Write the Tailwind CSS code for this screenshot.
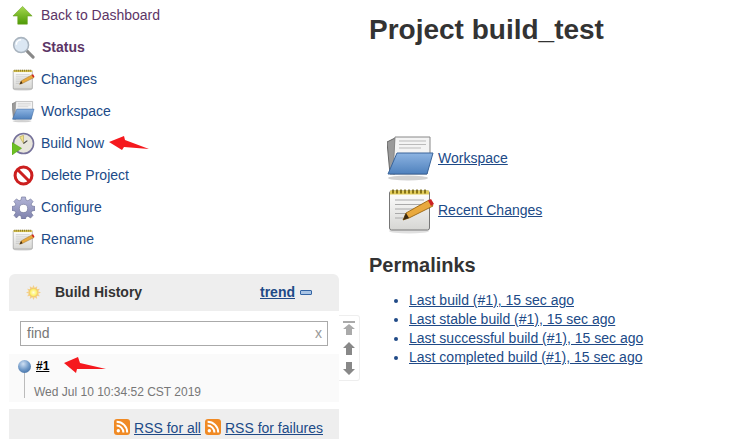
<!DOCTYPE html>
<html lang="en">
<head>
    <meta charset="UTF-8">
    <title>Project build_test</title>
    <script src="https://cdn.jsdelivr.net/npm/@tailwindcss/browser@4"></script>
</head>
<body class="h-[439px] w-[733px] overflow-hidden bg-white font-['Liberation_Sans',Arial,sans-serif] text-[14px] text-[#333]">
    <!-- shared icons -->
    <svg class="absolute h-0 w-0">
        <defs>
            <linearGradient id="folderBlue" x1="0" y1="0" x2="0" y2="1"><stop offset="0" stop-color="#8db4e2"/><stop offset="1" stop-color="#4f81bd"/></linearGradient>
            <linearGradient id="paper" x1="0" y1="0" x2="0" y2="1"><stop offset="0" stop-color="#fff"/><stop offset="1" stop-color="#d6d6d3"/></linearGradient>
            <linearGradient id="greenUp" x1="0" y1="0" x2="0" y2="1"><stop offset="0" stop-color="#a5d84e"/><stop offset="1" stop-color="#4e9a06"/></linearGradient>
            <linearGradient id="gearFill" x1="0" y1="0" x2="0" y2="1"><stop offset="0" stop-color="#b4b6d8"/><stop offset="1" stop-color="#7f82ad"/></linearGradient>
            <radialGradient id="sun" cx="0.5" cy="0.5" r="0.5"><stop offset="0" stop-color="#fffde0"/><stop offset="0.7" stop-color="#fdf06a"/><stop offset="1" stop-color="#eec06e"/></radialGradient>
            <symbol id="notepad" viewBox="0 0 48 48">
                <ellipse cx="22" cy="45" rx="20" ry="2.500" fill="#000" opacity="0.12"/>
                <rect x="2.500" y="5" width="40" height="39" rx="2" fill="url(#paper)" stroke="#777"/>
                <path d="M3 4.500h39v4H3z" fill="#e0cb5a"/>
                <path d="M6 3.500v4M10 3.500v4M14 3.500v4M18 3.500v4M22 3.500v4M26 3.500v4M30 3.500v4M34 3.500v4M38 3.500v4" stroke="#6b5a00" stroke-width="1.500"/>
                <path d="M8 14h29M8 18.500h29M8 23h22M8 27.500h13M8 32h8" stroke="#aaa" stroke-width="1"/>
                <path d="M16 34l3-7 23-13 4 6-24 12z" fill="#e9a93e" stroke="#8f5902" stroke-width="0.8"/>
                <path d="M41 14.500l3-1.500 3 5-3 2z" fill="#cc2222"/>
                <path d="M16 34l3-7 3 5z" fill="#3b2a12"/>
            </symbol>
            <symbol id="folder" viewBox="0 0 48 48">
                <ellipse cx="21" cy="44" rx="20" ry="2.500" fill="#000" opacity="0.18"/>
                <path d="M0 8l8-4v36H3z" fill="#9a9a9a" stroke="#666"/>
                <path d="M8 3h35v16l-3 21H6z" fill="#f4f4f4" stroke="#888"/>
                <path d="M12 7h27M12 10.500h27M12 14h22" stroke="#bbb"/>
                <path d="M10 19h36l-6 21H1z" fill="url(#folderBlue)" stroke="#3a659b"/>
            </symbol>
            <symbol id="gear" viewBox="0 0 24 24">
                <path d="M10 1h4l.6 3.200 2 .8L19.400 3l2.600 2.800-2 2.600.9 2 3.100.6v4l-3.100.6-.9 2 2 2.600L19.400 23l-2.800-2-2 .8L14 24h-4l-.6-3.200-2-.8L4.600 23 2 20.200l2-2.600-.9-2L0 15v-4l3.100-.6.9-2-2-2.600L4.600 3l2.800 2 2-.8z" fill="url(#gearFill)" stroke="#666a8f" stroke-width="0.6"/>
                <circle cx="12" cy="13" r="4.300" fill="#fff" stroke="#666a8f" stroke-width="0.6"/>
            </symbol>
            <symbol id="rss" viewBox="0 0 16 16">
                <rect width="16" height="16" rx="3" fill="#f08a24"/>
                <circle cx="4.300" cy="11.700" r="1.700" fill="#fff"/>
                <path d="M2.600 6.600a6.800 6.800 0 0 1 6.800 6.800M2.600 2.800a10.600 10.600 0 0 1 10.600 10.600" fill="none" stroke="#fff" stroke-width="2"/>
            </symbol>
        </defs>
    </svg>

    <div class="flex">
        <aside class="w-[369px] shrink-0">
            <!-- side tasks -->
            <nav class="-mt-px flex flex-col pl-[12px] text-[#204a87]">
                <a class="flex h-[32px] items-center gap-[6px]">
                    <svg class="h-[23px] w-[23px]" viewBox="0 0 24 24"><path d="M11 2.500l10 10h-5v8.500H6v-8.500H1z" fill="url(#greenUp)" stroke="#6aa01e" stroke-width="0.6"/></svg>
                    <span class="text-[#5c3566]">Back to Dashboard</span>
                </a>
                <a class="flex h-[32px] items-center gap-[6px]">
                    <svg class="h-[23px] w-[23px]" viewBox="0 0 24 24"><path d="M15 15l7 7" stroke="#888" stroke-width="3.200" stroke-linecap="round"/><circle cx="9.500" cy="9.500" r="7.800" fill="#dbe7f3" stroke="#a9b4bf" stroke-width="1.600"/><path d="M4.500 9a5 5 0 0 1 5-5" fill="none" stroke="#fff" stroke-width="1.600"/></svg>
                    <span class="ml-px font-bold text-[#5c3566]">Status</span>
                </a>
                <a class="flex h-[32px] items-center gap-[6px]">
                    <svg class="h-[23px] w-[23px]"><use href="#notepad"/></svg>
                    <span>Changes</span>
                </a>
                <a class="flex h-[32px] items-center gap-[6px]">
                    <svg class="h-[23px] w-[23px]"><use href="#folder"/></svg>
                    <span>Workspace</span>
                </a>
                <a class="flex h-[32px] items-center gap-[6px]">
                    <svg class="h-[23px] w-[23px]" viewBox="0 0 24 24"><circle cx="12" cy="12" r="10.500" fill="#e8e6dc" stroke="#75719a" stroke-width="1.600"/><path d="M12 3.500L8 5l4 7z" fill="#f3e38a" stroke="#a0903a" stroke-width="0.5"/><path d="M12 12l4-3" stroke="#444" stroke-width="1.200"/><path d="M0 11l10 6-10 7z" fill="#6cc024" stroke="#4e9a06" stroke-width="0.5"/></svg>
                    <span>Build Now</span>
                </a>
                <a class="flex h-[32px] items-center gap-[6px]">
                    <svg class="h-[23px] w-[23px]" viewBox="0 0 24 24"><circle cx="12" cy="12" r="8.800" fill="#fff" stroke="#cc1f1f" stroke-width="3.200"/><path d="M6 6l12 12" stroke="#cc1f1f" stroke-width="3.200"/></svg>
                    <span>Delete Project</span>
                </a>
                <a class="flex h-[32px] items-center gap-[6px]">
                    <svg class="h-[23px] w-[23px]"><use href="#gear"/></svg>
                    <span>Configure</span>
                </a>
                <a class="flex h-[32px] items-center gap-[6px]">
                    <svg class="h-[23px] w-[23px]"><use href="#notepad"/></svg>
                    <span>Rename</span>
                </a>
            </nav>

            <!-- build history -->
            <div class="relative mt-[19px] ml-[9px] w-[330px] rounded-t-[6px] bg-[#eee]">
                <div class="flex h-[37px] items-center pr-[27px] pl-[17px]">
                    <svg class="h-[15px] w-[15px]" viewBox="0 0 16 16"><path d="M8 0l1.300 3 2.700-1.700-.4 3.200 3.200-.4L13 6.700 16 8l-3 1.300 1.700 2.700-3.200-.4.4 3.200L9.300 13 8 16l-1.300-3L4 14.800l.4-3.200-3.200.4L3 9.300 0 8l3-1.300L1.200 4l3.200.4L4 1.300l2.700 1.700z" fill="#f4d08a"/><circle cx="8" cy="8" r="4.800" fill="url(#sun)"/></svg>
                    <span class="ml-[14px] font-bold text-[#333]">Build History</span>
                    <a class="ml-auto font-bold text-[#204a87] underline">trend</a>
                    <span class="ml-[5px] h-[5px] w-[12px] rounded-[1px] border border-[#3465a4] bg-[#a9c4e4]"></span>
                </div>
                <div class="bg-white pt-[10px] pb-[7px]">
                    <div class="mx-[11px] flex h-[25px] items-center justify-between border border-[#aaa] pr-[5px] pl-[6px] text-[#777]">
                        <span>find</span>
                        <span class="text-[#999]">x</span>
                    </div>
                    <div class="mt-[8px] flex h-[48px] bg-[#fafafa] pl-[6px]">
                        <div class="flex w-[18px] flex-col items-center pt-[6px]">
                            <span class="h-[13px] w-[13px] rounded-full bg-[radial-gradient(circle_at_40%_30%,#cfe0f3,#6d97c6_50%,#2d5a92)]"></span>
                            <span class="h-[25px] w-px bg-[#bbb]"></span>
                        </div>
                        <div class="pl-[3px]">
                            <a class="block pt-[5px] text-[12px] leading-[14px] font-bold text-black underline">#1</a>
                            <p class="-ml-[2px] pt-[10px] text-[12px] text-[#777]">Wed Jul 10 10:34:52 CST 2019</p>
                        </div>
                    </div>
                </div>
                <div class="flex h-[40px] items-start justify-end gap-[3px] pt-[9px] pr-[16px]">
                    <svg class="mt-[1px] h-[16px] w-[16px]"><use href="#rss"/></svg>
                    <a class="ml-[1px] text-[#204a87] underline">RSS for all</a>
                    <svg class="mt-[1px] ml-[1px] h-[16px] w-[16px]"><use href="#rss"/></svg>
                    <a class="ml-[1px] text-[#204a87] underline">RSS for failures</a>
                </div>
                <!-- page scroller -->
                <div class="absolute top-[41px] left-full flex h-[66px] w-[21px] flex-col items-center justify-between rounded-r-[3px] border border-l-0 border-[#eee] bg-white py-[5px]">
                    <svg class="h-[14px] w-[12px]" viewBox="0 0 12 14"><path d="M0 0h12v2H0zM6 3l6 5H9v6H3V8H0z" fill="#aaa"/></svg>
                    <svg class="h-[13px] w-[12px]" viewBox="0 0 12 13"><path d="M6 0l6 6H9v7H3V6H0z" fill="#888"/></svg>
                    <svg class="h-[13px] w-[12px]" viewBox="0 0 12 13"><path d="M6 13l6-6H9V0H3v7H0z" fill="#888"/></svg>
                </div>
            </div>
        </aside>

        <main class="min-w-0 flex-1">
            <h1 class="pt-[14px] text-[28px] leading-[32px] font-bold text-[#333]">Project build_test</h1>
            <div class="mt-[88px] flex flex-col gap-[4px] pl-[18px]">
                <div class="flex h-[48px] items-center gap-[3px]">
                    <svg class="h-[48px] w-[48px]"><use href="#folder"/></svg>
                    <a class="text-[#204a87] underline">Workspace</a>
                </div>
                <div class="flex h-[48px] items-center gap-[3px]">
                    <svg class="h-[48px] w-[48px]"><use href="#notepad"/></svg>
                    <a class="text-[#204a87] underline">Recent Changes</a>
                </div>
            </div>
            <h2 class="mt-[19px] text-[20px] leading-[24px] font-bold text-[#333]">Permalinks</h2>
            <ul class="mt-[14px] list-disc pl-[40px] leading-[19px] text-[#204a87]">
                <li><a class="underline">Last build (#1), 15 sec ago</a></li>
                <li><a class="underline">Last stable build (#1), 15 sec ago</a></li>
                <li><a class="underline">Last successful build (#1), 15 sec ago</a></li>
                <li><a class="underline">Last completed build (#1), 15 sec ago</a></li>
            </ul>
        </main>
    </div>

    <!-- red annotation arrows -->
    <svg class="absolute top-[136px] left-[109px] h-[15px] w-[41px]" viewBox="0 0 41 15"><path d="M0 6L15 0l1 4 24 9-25-2-2 3z" fill="#f5191e"/></svg>
    <svg class="absolute top-[357px] left-[64px] h-[17px] w-[43px]" viewBox="0 0 43 17"><path d="M0 6L14 0l2 6 26 6-29 0-1 4z" fill="#f5191e"/></svg>
</body>
</html>
